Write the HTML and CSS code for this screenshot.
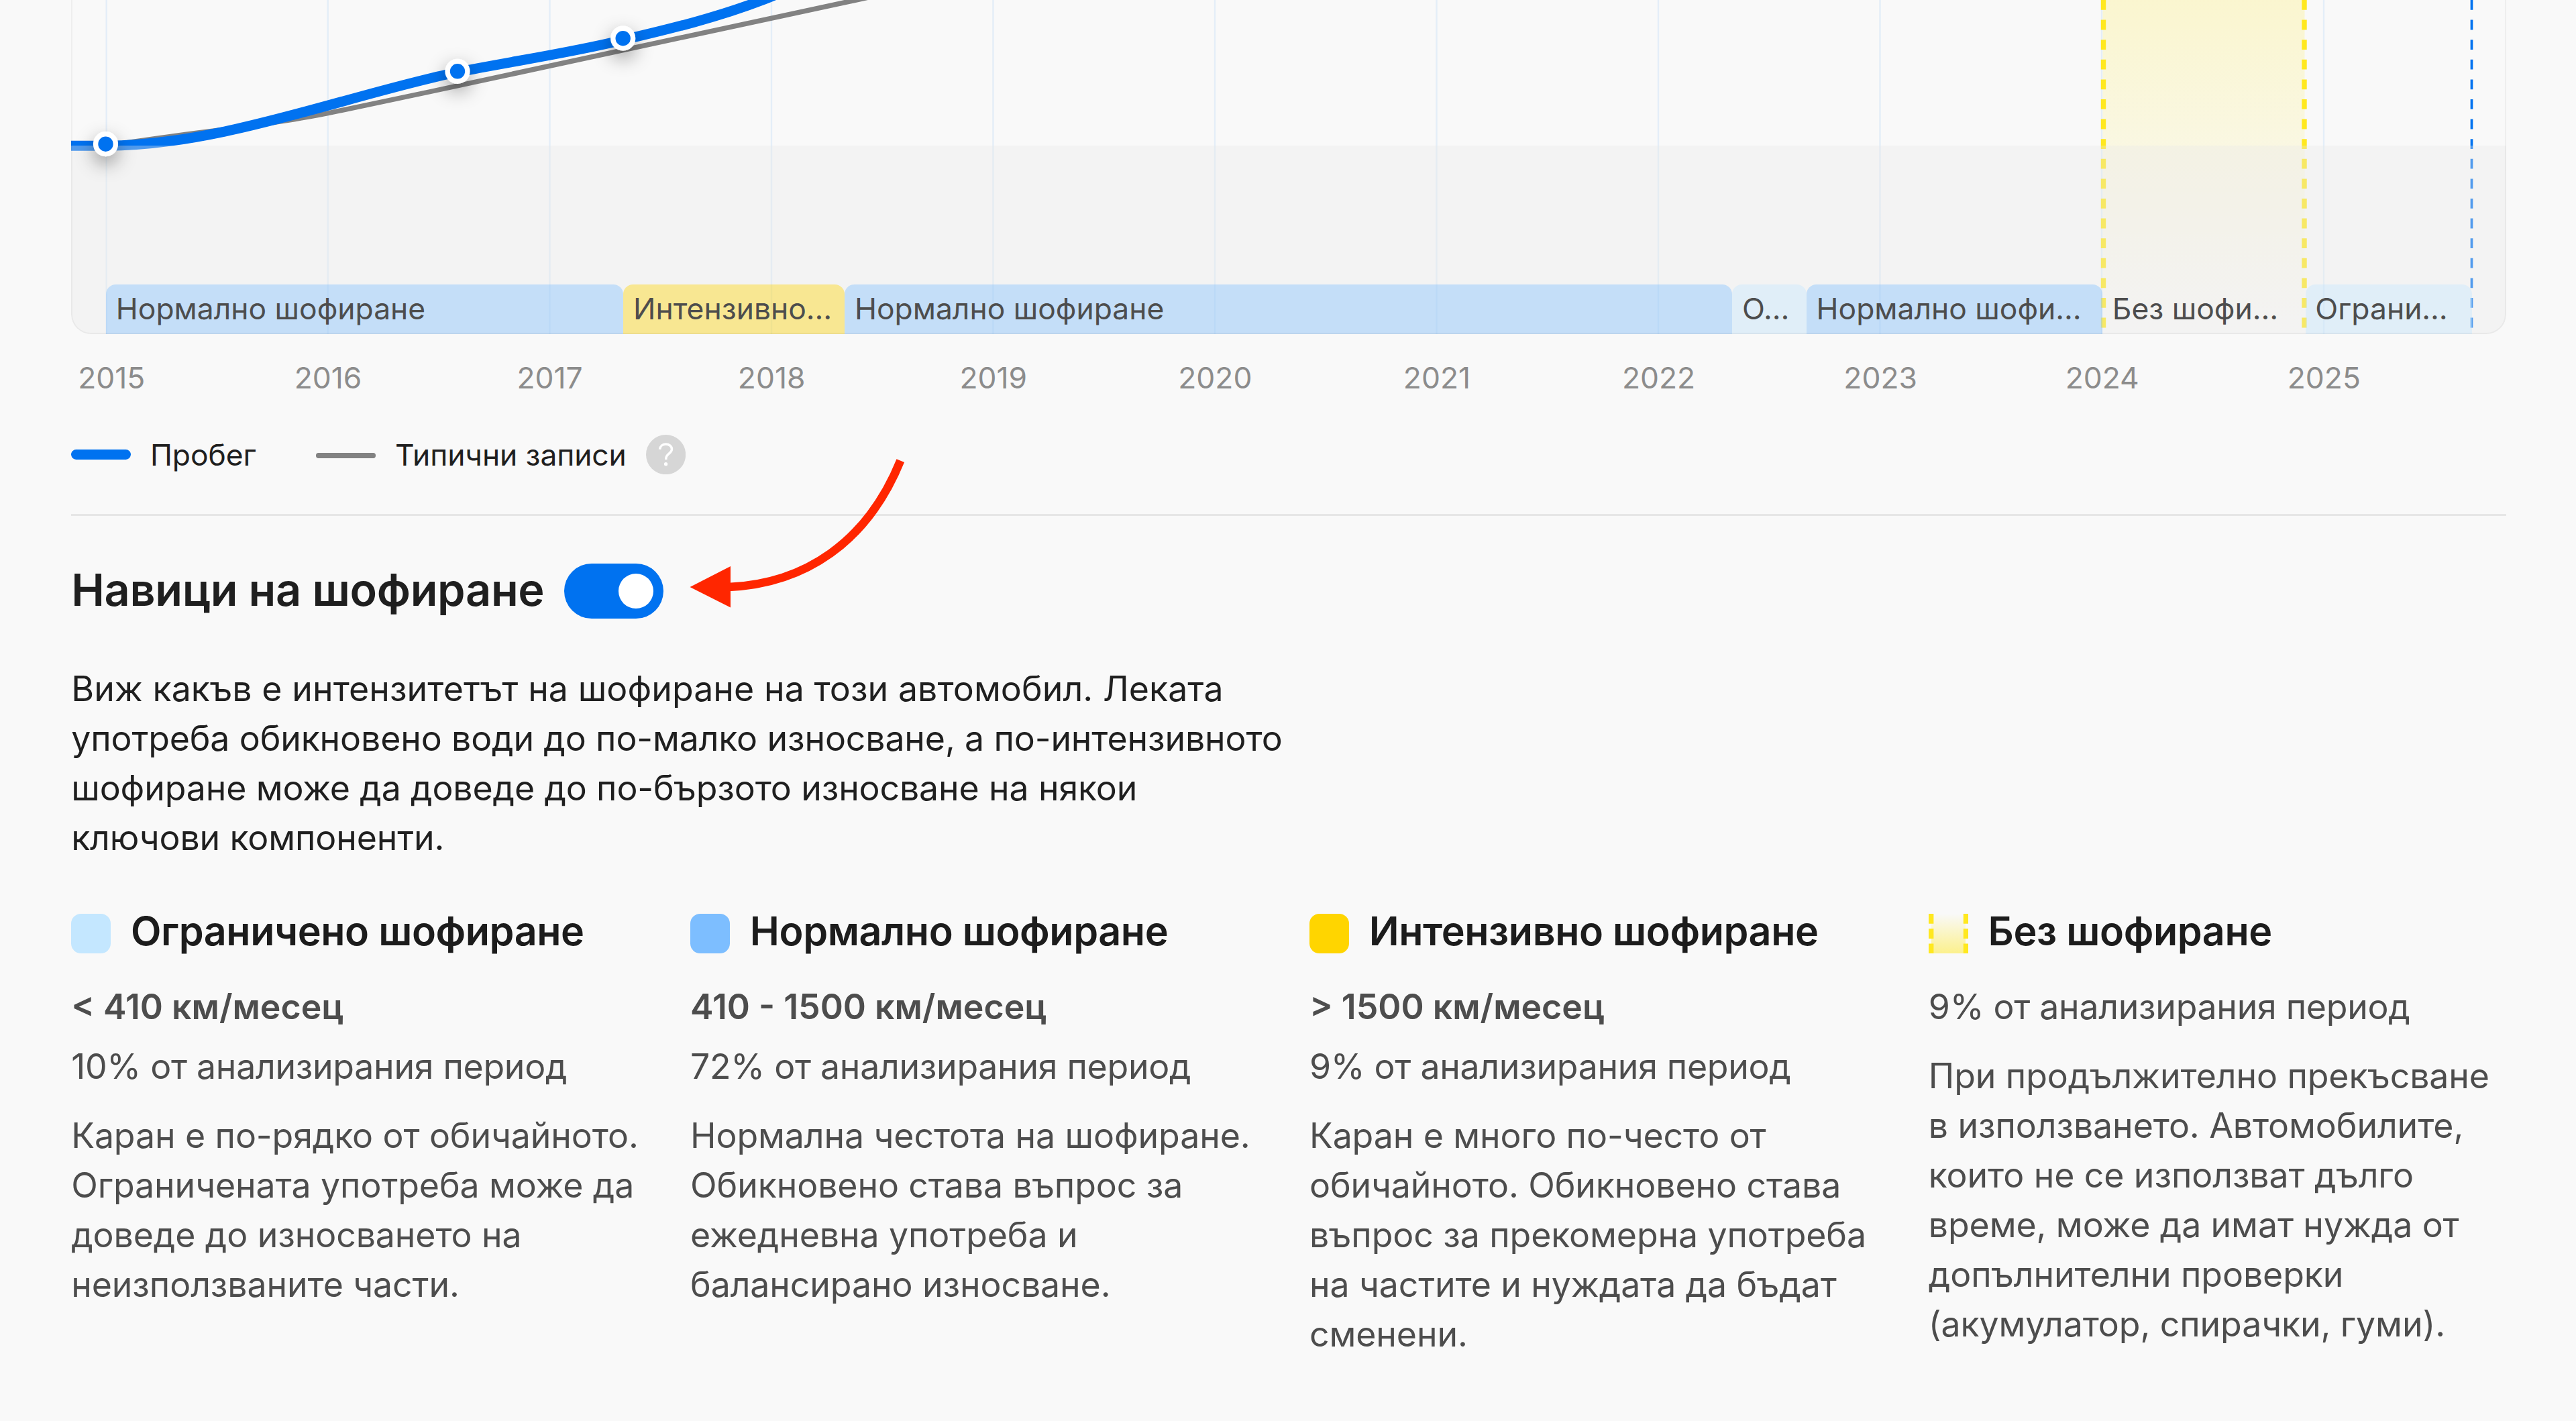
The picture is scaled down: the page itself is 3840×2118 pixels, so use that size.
FILE: index.html
```html
<!DOCTYPE html>
<html lang="bg">
<head>
<meta charset="utf-8">
<title>Навици на шофиране</title>
<link rel="stylesheet" href="styles.css">
</head>
<body>
<main class="page">
  <section class="chart">
    <svg class="plot" viewBox="106.5 0 3630 498" width="3630" height="498">
      <defs>
        <linearGradient id="idle" x1="0" y1="0" x2="0" y2="1">
          <stop offset="0" stop-color="#ffe81f" stop-opacity=".19"/>
          <stop offset="1" stop-color="#ffe81f" stop-opacity="0"/>
        </linearGradient>
        <filter id="shadow" x="-150%" y="-150%" width="400%" height="400%">
          <feDropShadow dx="0" dy="11" stdDeviation="14" flood-color="#000" flood-opacity=".38"/>
        </filter>
      </defs>
      <path class="grid" d="M159.2 0V498M489.2 0V498M820 0V498M1150.5 0V498M1481 0V498M1811.5 0V498M2142 0V498M2472.5 0V498M2803 0V498M3133.5 0V498M3464.5 0V498"/>
      <rect x="3135" y="0" width="301" height="498" fill="url(#idle)"/>
      <path class="idle-edge" d="M3136 0V498M3435.5 0V498"/>
      <path class="today" d="M3685 0V498"/>
      <path class="typical" d="M106 217.2H158.7C280 198 400 187 488 169L640 137L1300 -5"/>
      <path class="mileage" d="M106 217.2H158.7C330 217.2 520 141 682.6 107.5C760 92 850 79 929.4 59.5C1000 43 1070 26 1140 -1C1190 -20 1240 -50 1300 -90"/>
      <rect x="106.5" y="217" width="3630" height="281" fill="#e8e8e8" fill-opacity=".35"/>
      <g class="points">
        <circle cx="158" cy="214.7" r="14.9"/>
        <circle cx="682.5" cy="106.3" r="14.9"/>
        <circle cx="929.2" cy="57.2" r="14.9"/>
      </g>
    </svg>
    <div class="segments">
      <div class="seg normal" style="width:771.2px">Нормално шофиране</div>
      <div class="seg intense" style="width:330px">Интензивно…</div>
      <div class="seg normal" style="width:1323px">Нормално шофиране</div>
      <div class="seg limited" style="width:110.6px">О…</div>
      <div class="seg normal" style="width:441.2px">Нормално шофи…</div>
      <div class="seg" style="width:302.6px">Без шофи…</div>
      <div class="seg limited" style="width:248.6px">Ограни…</div>
    </div>
  </section>
  <div class="years">
    <span>2015</span><span>2016</span><span>2017</span><span>2018</span><span>2019</span><span>2020</span><span>2021</span><span>2022</span><span>2023</span><span>2024</span><span>2025</span>
  </div>
  <div class="legend">
    <span class="key"><i class="bar blue"></i>Пробег</span>
    <span class="key"><i class="bar gray"></i>Типични записи
      <svg class="help" viewBox="0 0 16 16"><circle cx="8" cy="8" r="8" fill="#d6d6d6"/><path d="M5.55 5.9C5.7 4.6 6.7 3.8 8 3.8s2.4.8 2.4 2c0 1.7-2.35 1.9-2.35 3.75v.45" fill="none" stroke="#fff" stroke-width=".95"/><circle cx="8" cy="11.8" r=".72" fill="#fff"/></svg>
    </span>
  </div>
  <section class="habits">
    <header class="head">
      <h2>Навици на шофиране</h2>
      <span class="toggle"><i></i></span>
    </header>
    <p class="intro">Виж какъв е интензитетът на шофиране на този автомобил. Леката употреба обикновено води до по-малко износване, а по-интензивното шофиране може да доведе до по-бързото износване на някои ключови компоненти.</p>
    <div class="cards">
      <article>
        <h3><i class="swatch light"></i>Ограничено шофиране</h3>
        <p class="rate">&lt; 410 км/месец</p>
        <p class="share">10% от анализирания период</p>
        <p class="desc">Каран е по-рядко от обичайното. Ограничената употреба може да доведе до износването на неизползваните части.</p>
      </article>
      <article>
        <h3><i class="swatch mid"></i>Нормално шофиране</h3>
        <p class="rate">410 - 1500 км/месец</p>
        <p class="share">72% от анализирания период</p>
        <p class="desc">Нормална честота на шофиране. Обикновено става въпрос за ежедневна употреба и балансирано износване.</p>
      </article>
      <article>
        <h3><i class="swatch gold"></i>Интензивно шофиране</h3>
        <p class="rate">&gt; 1500 км/месец</p>
        <p class="share">9% от анализирания период</p>
        <p class="desc">Каран е много по-често от обичайното. Обикновено става въпрос за прекомерна употреба на частите и нуждата да бъдат сменени.</p>
      </article>
      <article>
        <h3><svg class="swatch" viewBox="0 0 59.2 59.2"><defs><linearGradient id="sw" x1="0" y1="0" x2="0" y2="1"><stop offset="0" stop-color="#ffe81f" stop-opacity="0"/><stop offset="1" stop-color="#ffe81f" stop-opacity=".5"/></linearGradient></defs><path d="M4 0H55V59.2H4z" fill="url(#sw)"/><path d="M3.7 0V59.2M55.5 0V59.2" stroke="#ffe81f" stroke-width="7.4" stroke-dasharray="14.8 7.4"/></svg>Без шофиране</h3>
        <p class="share">9% от анализирания период</p>
        <p class="desc">При продължително прекъсване в използването. Автомобилите, които не се използват дълго време, може да имат нужда от допълнителни проверки (акумулатор, спирачки, гуми).</p>
      </article>
    </div>
  </section>
  <svg class="arrow" viewBox="0 0 330 230" width="330" height="230"><path d="M322.3 6.7C273 128 180 190 66 195" fill="none" stroke="#ff2600" stroke-width="12.5"/><path d="M8.5 195L69 164V225.5z" fill="#ff2600"/></svg>
</main>
</body>
</html>
```
FILE: styles.css
```css
* { box-sizing: border-box; margin: 0; padding: 0; }
body {
  background: #f9f9f9;
  color: #1f1f1f;
  font: 400 51.8px/74px Inter, "Noto Sans", sans-serif;
}
.page { position: relative; width: 3840px; height: 2118px; padding: 0 103.8px 0 106.2px; overflow: hidden; }

/* Chart */
.chart {
  position: relative;
  display: flex;
  align-items: flex-end;
  height: 497.6px;
  border-radius: 0 0 29.6px 29.6px;
  overflow: hidden;
}
.chart::after {
  content: "";
  position: absolute;
  inset: 0;
  border: 2px solid rgba(0, 0, 0, .04);
  border-top: 0;
  border-radius: inherit;
}
.plot { position: absolute; left: 0; top: 0; }
.grid { stroke: #dce9f7; stroke-opacity: .75; stroke-width: 2.4; }
.idle-edge { stroke: #ffe81f; stroke-width: 7.4; stroke-dasharray: 14.8 14.8; }
.today { stroke: #0072f0; stroke-width: 3.7; stroke-dasharray: 14.8 14.8; }
.typical { fill: none; stroke: #828282; stroke-width: 7.4; }
.mileage { fill: none; stroke: #0072f0; stroke-width: 15; }
.points circle { fill: #0072f0; stroke: #fff; stroke-width: 7.4; filter: url(#shadow); }
.segments { position: relative; display: flex; height: 73.8px; padding-left: 51.8px; }
.seg {
  flex: none;
  padding-left: 14.8px;
  border-radius: 14.8px 14.8px 0 0;
  color: #4d4d4d;
  font-size: 44.4px;
  line-height: 72px;
  white-space: nowrap;
}
.normal { background: rgba(125, 190, 255, .4); }
.intense { background: rgba(255, 213, 0, .4); }
.limited { background: rgba(196, 231, 255, .4); }

.years { display: flex; height: 130px; color: #8c8c8c; font-size: 44.4px; line-height: 131px; }
.years span { flex: none; width: 330.6px; text-align: center; }
.years span:first-child { width: 217.5px; padding-left: 10px; text-align: left; }

/* Legend */
.legend { display: flex; gap: 89.5px; height: 141.6px; padding-top: 20px; border-bottom: 3px solid #e6e6e6; font-size: 44.4px; line-height: 60px; letter-spacing: -.1px; }
.key { display: flex; align-items: center; gap: 29px; height: 60px; }
.bar { width: 88.8px; height: 14.8px; border-radius: 7.4px; }
.blue { background: #0072f0; }
.gray { height: 7.4px; margin-top: 3px; border-radius: 3.7px; background: #828282; }
.help { width: 59.2px; height: 59.2px; }

/* Habits */
.head { display: flex; align-items: center; gap: 29.6px; height: 81.4px; margin-top: 71.2px; }
h2 { font-size: 66.6px; font-weight: 600; line-height: 81.4px; letter-spacing: -.33px; margin-top: -5px; }
.toggle { display: flex; justify-content: flex-end; width: 148px; height: 81.4px; padding: 14.8px; border-radius: 41px; background: #0072f0; }
.toggle i { width: 51.8px; height: 51.8px; border-radius: 50%; background: #fff; }
.intro { width: 1815px; margin-top: 67.6px; letter-spacing: -.14px; }
.intro::first-line { letter-spacing: .07px; }
.cards { display: grid; grid-template-columns: repeat(4, 1fr); gap: 61.5px; margin-top: 59px; color: #4d4d4d; }
h3 { display: flex; align-items: center; gap: 29.6px; margin-bottom: 29.6px; color: #1c1c1c; font-size: 59.2px; font-weight: 600; line-height: 88.8px; letter-spacing: -.42px; white-space: nowrap; }
.swatch { flex: none; width: 59.2px; height: 59.2px; margin-top: 4.8px; border-radius: 14.8px; }
svg.swatch { border-radius: 0; }
.light { background: #c4e7ff; }
.mid { background: #7dbeff; }
.gold { background: #ffd500; }
.rate { margin-bottom: 14.8px; font-weight: 600; }
.share { margin-bottom: 29.6px; letter-spacing: -.3px; }
.desc { letter-spacing: -.1px; }

/* Callout over the toggle row */
.arrow { position: absolute; left: 1020px; top: 680px; }
```
